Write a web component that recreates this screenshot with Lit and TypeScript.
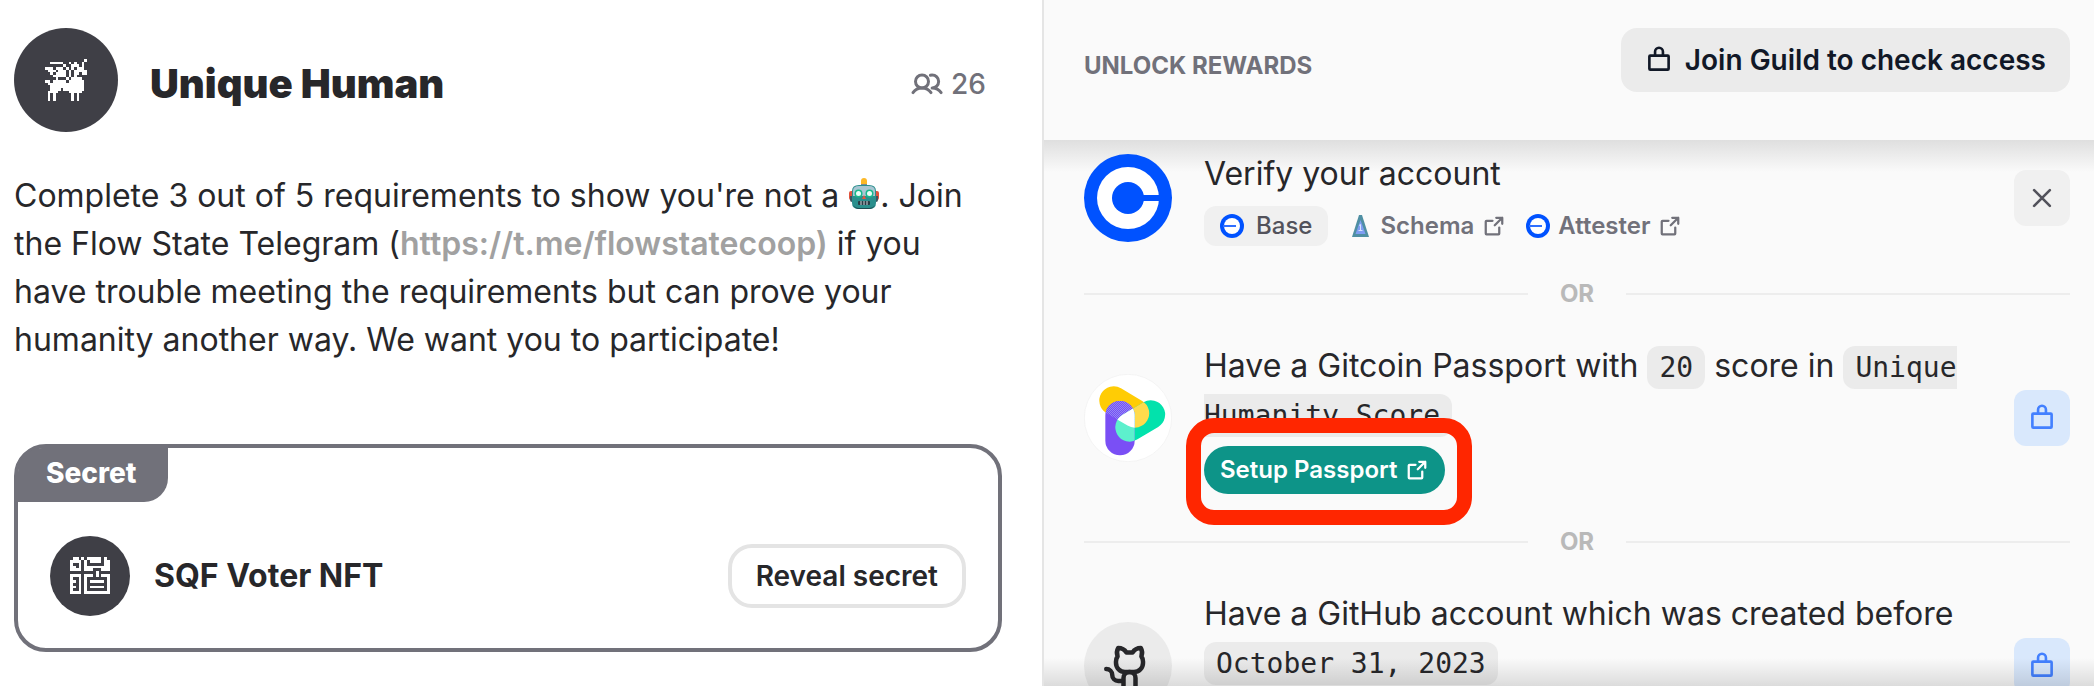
import { LitElement, html, css, svg } from "lit";
import { customElement, property } from "lit/decorators.js";

const PEGASUS = [
  "...............#",
  "..#####..#.#..#.",
  ".......#..###.#.",
  "###.###.#.#.###.",
  ".###.###.#.#####",
  "..#.####.#.##.##",
  "...#####.#.#....",
  "....#...#.####..",
  "##.#####.######.",
  ".##############.",
  "..#############.",
  "..####.########.",
  ".####....#####..",
  ".#.#......#.#...",
  ".#.#......#.#...",
  ".#.#......#.#...",
];

const CIRCUIT = [
  ".##.#.#####.#.",
  "####.#.####.##",
  "#..#.#......##",
  "##.#.#########",
  "####.###...###",
  ".........#....",
  "####.###.#.###",
  "#..#.#.......#",
  "##.#.#.#####.#",
  "#..#.#.......#",
  "##.#.#.#####.#",
  "#..#.#.......#",
  "####.#########",
];

const pixels = (rows: string[]) => {
  let d = "";
  rows.forEach((row, y) => {
    for (const run of row.matchAll(/#+/g)) {
      d += `M${run.index} ${y}h${run[0].length}v1h-${run[0].length}z`;
    }
  });
  return html`<svg
    class="pixels"
    viewBox="0 0 ${rows[0].length} ${rows.length}"
    shape-rendering="crispEdges"
    aria-hidden="true"
  >
    <path fill="#fff" d=${d} />
  </svg>`;
};

const icons = {
  users: svg`<circle cx="88" cy="108" r="52"/><path d="M16 197a88 88 0 0 1 144 0M155 58a54 54 0 0 1 14-2 52 52 0 0 1 0 104M169 160a88 88 0 0 1 72 37"/>`,
  lock: svg`<rect x="40" y="88" width="176" height="128" rx="8"/><path d="M92 88V52a36 36 0 0 1 72 0v36"/>`,
  close: svg`<path d="M200 56 56 200M200 200 56 56"/>`,
  external: svg`<path d="M216 104V40h-64M136 120l80-80M184 144v64a8 8 0 0 1-8 8H48a8 8 0 0 1-8-8V80a8 8 0 0 1 8-8h64"/>`,
  github: svg`<path d="M119.8 56A52 52 0 0 0 76 32a52 52 0 0 0-3.5 44.7A49.300 49.300 0 0 0 64 104v8a48 48 0 0 0 48 48h48a48 48 0 0 0 48-48v-8a49.300 49.300 0 0 0-8.500-27.300A52 52 0 0 0 196 32a52 52 0 0 0-43.800 24Z"/><path d="M104 232v-40a32 32 0 0 1 64 0v40M104 208H76a32 32 0 0 1-32-32 32 32 0 0 0-32-32"/>`,
};

const icon = (name: keyof typeof icons, size: number) => html`<svg
  class="icon"
  width=${size}
  height=${size}
  viewBox="0 0 256 256"
  aria-hidden="true"
>
  ${icons[name]}
</svg>`;

const baseMark = html`<svg width="24" height="24" viewBox="0 0 24 24" aria-hidden="true">
  <circle cx="12" cy="12" r="12" fill="#0052ff" />
  <circle cx="12" cy="12" r="8" fill="#fff" />
  <path d="M3 12h13" stroke="#2f6fff" stroke-width="2" />
</svg>`;

const schemaMark = html`<svg width="24" height="24" viewBox="0 0 24 24" aria-hidden="true">
  <path d="M11 1h3l7 22H4z" fill="#4f8fa3" />
  <path d="M12.500 6 17.500 20h-10z" fill="#7f9df2" />
  <path d="M11 11.500l1.500-1V16M10.500 16.500h4" stroke="#d5e0ff" fill="none" />
</svg>`;

const robot = html`<svg class="robot" width="32" height="32" viewBox="0 0 30 32" role="img" aria-label="robot">
  <path d="M0 15q0-2 2-2h2v9H2q-2 0-2-2zM30 15q0-2-2-2h-2v9h2q2 0 2-2z" fill="#e0533d" />
  <path d="M1 18h3v6H3q-2 0-2-2zM29 18h-3v6h1q2 0 2-2z" fill="#3d5560" />
  <rect x="12" y="5" width="6" height="4" fill="#7c8a92" />
  <path d="M12 3q0-3 3-3t3 3v3h-6z" fill="#fcb827" />
  <path d="M3 13q0-6 7-6h10q7 0 7 6v12q0 6-7 6H10q-7 0-7-6z" fill="#2a8f8d" />
  <path d="M4 13q0-5 6-5h10q6 0 6 5v5H4z" fill="#a9c6d3" />
  <circle cx="9.500" cy="15.500" r="4" fill="#19b98c" /><circle cx="20.500" cy="15.500" r="4" fill="#19b98c" />
  <circle cx="9.500" cy="15.500" r="2.500" fill="#e8fff8" /><circle cx="20.500" cy="15.500" r="2.500" fill="#e8fff8" />
  <path d="M15 17l2 4h-4z" fill="#e8563c" />
  <rect x="9" y="23" width="12" height="4" rx="1" fill="#293b44" />
  <path d="M12 23v4M15 23v4M18 23v4" stroke="#cfd8dc" />
  <path d="M4 27q2 4 6 4h10q4 0 6-4-2 3-6 3H10q-4 0-6-3z" fill="#1f4a50" />
</svg>`;

const coinbaseLogo = html`<svg width="88" height="88" viewBox="0 0 88 88" aria-hidden="true">
  <circle cx="44" cy="44" r="44" fill="#0052ff" />
  <circle cx="44" cy="44" r="31" fill="#fff" />
  <circle cx="44" cy="44" r="16" fill="#0052ff" />
  <rect x="56" y="41" width="20" height="6" fill="#0052ff" />
</svg>`;

const passportLogo = html`<svg width="88" height="88" viewBox="0 0 264 264" aria-hidden="true">
  <defs>
    <clipPath id="yellow"><rect x="-43" y="-43" width="160" height="86" rx="43" transform="translate(89 80) rotate(30.700)" /></clipPath>
    <clipPath id="green"><rect x="-43" y="-43" width="160" height="86" rx="43" transform="translate(137 160) rotate(-31)" /></clipPath>
    <pattern id="dots" width="6" height="6" patternUnits="userSpaceOnUse">
      <rect width="6" height="6" fill="#7451f5" /><rect width="2" height="2" fill="#c3c8f5" /><rect x="3" y="3" width="2" height="2" fill="#c3c8f5" />
    </pattern>
  </defs>
  <circle cx="132" cy="132" r="131" fill="#fff" stroke="#f0f0f0" stroke-width="2" />
  <g clip-path="url(#yellow)"><rect width="264" height="264" fill="#ffcc05" /></g>
  <g clip-path="url(#green)">
    <rect width="264" height="264" fill="#02e2ac" />
    <g clip-path="url(#yellow)"><rect width="264" height="264" fill="#ffdb4c" /></g>
  </g>
  <rect x="64" y="81" width="88" height="163" rx="44" fill="#7a4ff5" />
  <g clip-path="url(#yellow)"><rect x="64" y="81" width="88" height="163" rx="44" fill="url(#dots)" /></g>
  <g clip-path="url(#green)">
    <rect x="64" y="81" width="88" height="163" rx="44" fill="#5df0cd" />
    <g clip-path="url(#yellow)"><rect x="64" y="81" width="88" height="163" rx="44" fill="#fff" /></g>
  </g>
</svg>`;

const githubLogo = html`<span class="logo-disc">${icon("github", 48)}</span>`;

const shared = css`
  * {
    box-sizing: border-box;
  }
  svg {
    display: block;
    flex: none;
  }
  .icon {
    fill: none;
    stroke: currentColor;
    stroke-width: 24;
    stroke-linecap: round;
    stroke-linejoin: round;
    overflow: visible;
  }
  button,
  a {
    font: inherit;
    color: inherit;
    text-decoration: none;
    cursor: pointer;
  }
  h1,
  h2,
  h3,
  p {
    margin: 0;
  }
`;

@customElement("role-panel")
export class RolePanel extends LitElement {
  static styles = [
    shared,
    css`
      :host {
        display: block;
        padding: 28px 40px 32px 14px;
      }
      .head {
        display: flex;
        align-items: center;
        gap: 32px;
        padding-right: 16px;
      }
      .avatar {
        display: grid;
        place-items: center;
        flex: none;
        width: 104px;
        height: 104px;
        border-radius: 50%;
        background: #3f3f46;
      }
      .avatar.small {
        width: 80px;
        height: 80px;
      }
      .avatar .pixels {
        width: 42px;
      }
      .avatar.small .pixels {
        width: 40px;
      }
      .title {
        display: flex;
        flex: 1;
        align-items: center;
        justify-content: space-between;
        padding-top: 8px;
      }
      h1 {
        font-size: 40px;
        line-height: 48px;
        font-weight: 900;
      }
      .members {
        display: flex;
        align-items: center;
        gap: 8px;
        font-size: 28px;
        font-weight: 500;
        color: #71717a;
      }
      .about {
        margin-top: 40px;
        font-size: 32px;
        line-height: 48px;
      }
      .about a {
        font-weight: 600;
        color: #a1a1a1;
      }
      .robot {
        display: inline-block;
        vertical-align: -3px;
      }
      .secret {
        margin-top: 80px;
        border: 4px solid #71717a;
        border-radius: 32px;
      }
      .tag {
        display: inline-block;
        padding: 0 32px 4px 28px;
        border-radius: 24px 0 24px 0;
        background: #71717a;
        color: #fff;
        font-size: 28px;
        line-height: 50px;
        font-weight: 800;
        vertical-align: top;
      }
      .reward {
        display: flex;
        align-items: center;
        gap: 24px;
        padding: 34px 32px 32px;
      }
      h2 {
        flex: 1;
        font-size: 32px;
        line-height: 48px;
        font-weight: 700;
      }
      .reveal {
        height: 64px;
        padding: 0 24px;
        border: 4px solid #e4e4e4;
        border-radius: 24px;
        background: #fff;
        font-size: 28px;
        font-weight: 600;
      }
    `,
  ];

  render() {
    return html`
      <header class="head">
        <span class="avatar">${pixels(PEGASUS)}</span>
        <div class="title">
          <h1>Unique Human</h1>
          <span class="members">${icon("users", 32)}<span>26</span></span>
        </div>
      </header>
      <p class="about">
        Complete 3 out of 5 requirements to show you're not a ${robot}. Join the Flow State Telegram
        (<a href="https://t.me/flowstatecoop">https://t.me/flowstatecoop)</a> if you have trouble
        meeting the requirements but can prove your humanity another way. We want you to
        participate!
      </p>
      <section class="secret">
        <span class="tag">Secret</span>
        <div class="reward">
          <span class="avatar small">${pixels(CIRCUIT)}</span>
          <h2>SQF Voter NFT</h2>
          <button class="reveal">Reveal secret</button>
        </div>
      </section>
    `;
  }
}

@customElement("requirement-row")
export class RequirementRow extends LitElement {
  @property() status: "denied" | "locked" = "locked";

  static styles = [
    shared,
    css`
      :host {
        display: flex;
        align-items: center;
        gap: 32px;
      }
      .body {
        flex: 1;
        min-width: 0;
      }
      .status {
        display: grid;
        place-items: center;
        flex: none;
        width: 56px;
        height: 56px;
        border-radius: 12px;
        background: #d9e8fc;
        color: #4380ff;
      }
      .status.denied {
        background: #f0f0f0;
        color: #52525b;
      }
    `,
  ];

  render() {
    return html`
      <slot name="logo"></slot>
      <div class="body"><slot></slot></div>
      <span class="status ${this.status}">${icon(this.status === "denied" ? "close" : "lock", 28)}</span>
    `;
  }
}

@customElement("requirements-panel")
export class RequirementsPanel extends LitElement {
  static styles = [
    shared,
    css`
      :host {
        position: relative;
        display: flex;
        flex-direction: column;
        min-height: 0;
        overflow: hidden;
        border-left: 2px solid #e5e5e5;
        background: #fafafa;
      }
      .bar {
        display: flex;
        align-items: baseline;
        justify-content: space-between;
        flex: none;
        height: 140px;
        padding: 28px 24px 0 40px;
      }
      h2 {
        font-size: 24px;
        line-height: 28px;
        font-weight: 700;
        color: #71717a;
      }
      .join {
        display: flex;
        align-items: center;
        gap: 12px;
        height: 64px;
        padding: 0 24px;
        border: 0;
        border-radius: 16px;
        background: #ebebeb;
        color: #111827;
        font-size: 28px;
        font-weight: 600;
      }
      .list {
        flex: 1;
        min-height: 0;
        overflow: hidden;
        padding: 10px 24px 0 40px;
        background: linear-gradient(#dfdfdf, rgba(250, 250, 250, 0)) top / 100% 32px no-repeat;
      }
      .fade {
        position: absolute;
        inset: auto 0 0;
        height: 28px;
        background: linear-gradient(transparent, rgba(0, 0, 0, 0.12));
      }
      h3 {
        font-size: 32px;
        line-height: 48px;
        font-weight: 400;
      }
      code {
        padding: 5px 12px;
        border-radius: 12px;
        background: #ebebeb;
        font: 28px/1 "DejaVu Sans Mono", monospace;
      }
      .links {
        display: flex;
        align-items: center;
        gap: 20px;
        margin-top: 8px;
        font-size: 24px;
        line-height: 28px;
        font-weight: 600;
        color: #71717a;
      }
      .links a {
        display: flex;
        align-items: center;
        gap: 8px;
      }
      .chain {
        display: flex;
        align-items: center;
        gap: 12px;
        height: 40px;
        padding: 0 16px;
        border-radius: 12px;
        background: #f0f0f0;
        color: #52525b;
        font-weight: 500;
      }
      .or {
        display: flex;
        align-items: center;
        gap: 32px;
        height: 96px;
        font-size: 24px;
        line-height: 28px;
        font-weight: 700;
        color: #b9b9b9;
      }
      .or::before,
      .or::after {
        content: "";
        flex: 1;
        height: 2px;
        background: #ededed;
      }
      .highlight {
        position: relative;
        display: inline-block;
        margin-top: 8px;
        vertical-align: top;
      }
      .highlight::after {
        content: "";
        position: absolute;
        inset: -28px -27px -31px -18px;
        border: 15px solid #ff2600;
        border-radius: 28px;
        pointer-events: none;
      }
      .setup {
        display: flex;
        align-items: center;
        gap: 8px;
        height: 48px;
        padding: 0 16px;
        border: 0;
        border-radius: 24px;
        background: #0d9488;
        color: #fff;
        font-size: 24px;
        line-height: 28px;
        font-weight: 600;
      }
      .tall {
        min-height: 152px;
      }
      .logo-disc {
        display: grid;
        place-items: center;
        width: 88px;
        height: 88px;
        border-radius: 50%;
        background: #ebebeb;
      }
    `,
  ];

  render() {
    return html`
      <header class="bar">
        <h2>UNLOCK REWARDS</h2>
        <button class="join">${icon("lock", 28)}<span>Join Guild to check access</span></button>
      </header>
      <div class="list">
        <requirement-row status="denied">
          <span slot="logo">${coinbaseLogo}</span>
          <h3>Verify your account</h3>
          <div class="links">
            <span class="chain">${baseMark}<span>Base</span></span>
            <a href="#schema">${schemaMark}<span>Schema</span>${icon("external", 24)}</a>
            <a href="#attester">${baseMark}<span>Attester</span>${icon("external", 24)}</a>
          </div>
        </requirement-row>
        <div class="or">OR</div>
        <requirement-row>
          <span slot="logo">${passportLogo}</span>
          <h3>Have a Gitcoin Passport with <code>20</code> score in <code>Unique Humanity Score</code></h3>
          <span class="highlight">
            <button class="setup"><span>Setup Passport</span>${icon("external", 24)}</button>
          </span>
        </requirement-row>
        <div class="or">OR</div>
        <requirement-row>
          <span slot="logo">${githubLogo}</span>
          <h3 class="tall">Have a GitHub account which was created before <code>October 31, 2023</code></h3>
        </requirement-row>
      </div>
      <div class="fade"></div>
    `;
  }
}

@customElement("app-root")
export class AppRoot extends LitElement {
  static styles = css`
    :host {
      display: grid;
      grid-template-columns: minmax(0, 521fr) minmax(0, 526fr);
      grid-template-rows: minmax(0, 1fr);
      height: 100vh;
      overflow: hidden;
      background: #fff;
      color: #27272a;
      font-family: Inter, "Liberation Sans", sans-serif;
      font-optical-sizing: none;
    }
  `;

  render() {
    return html`<role-panel></role-panel><requirements-panel></requirements-panel>`;
  }
}
